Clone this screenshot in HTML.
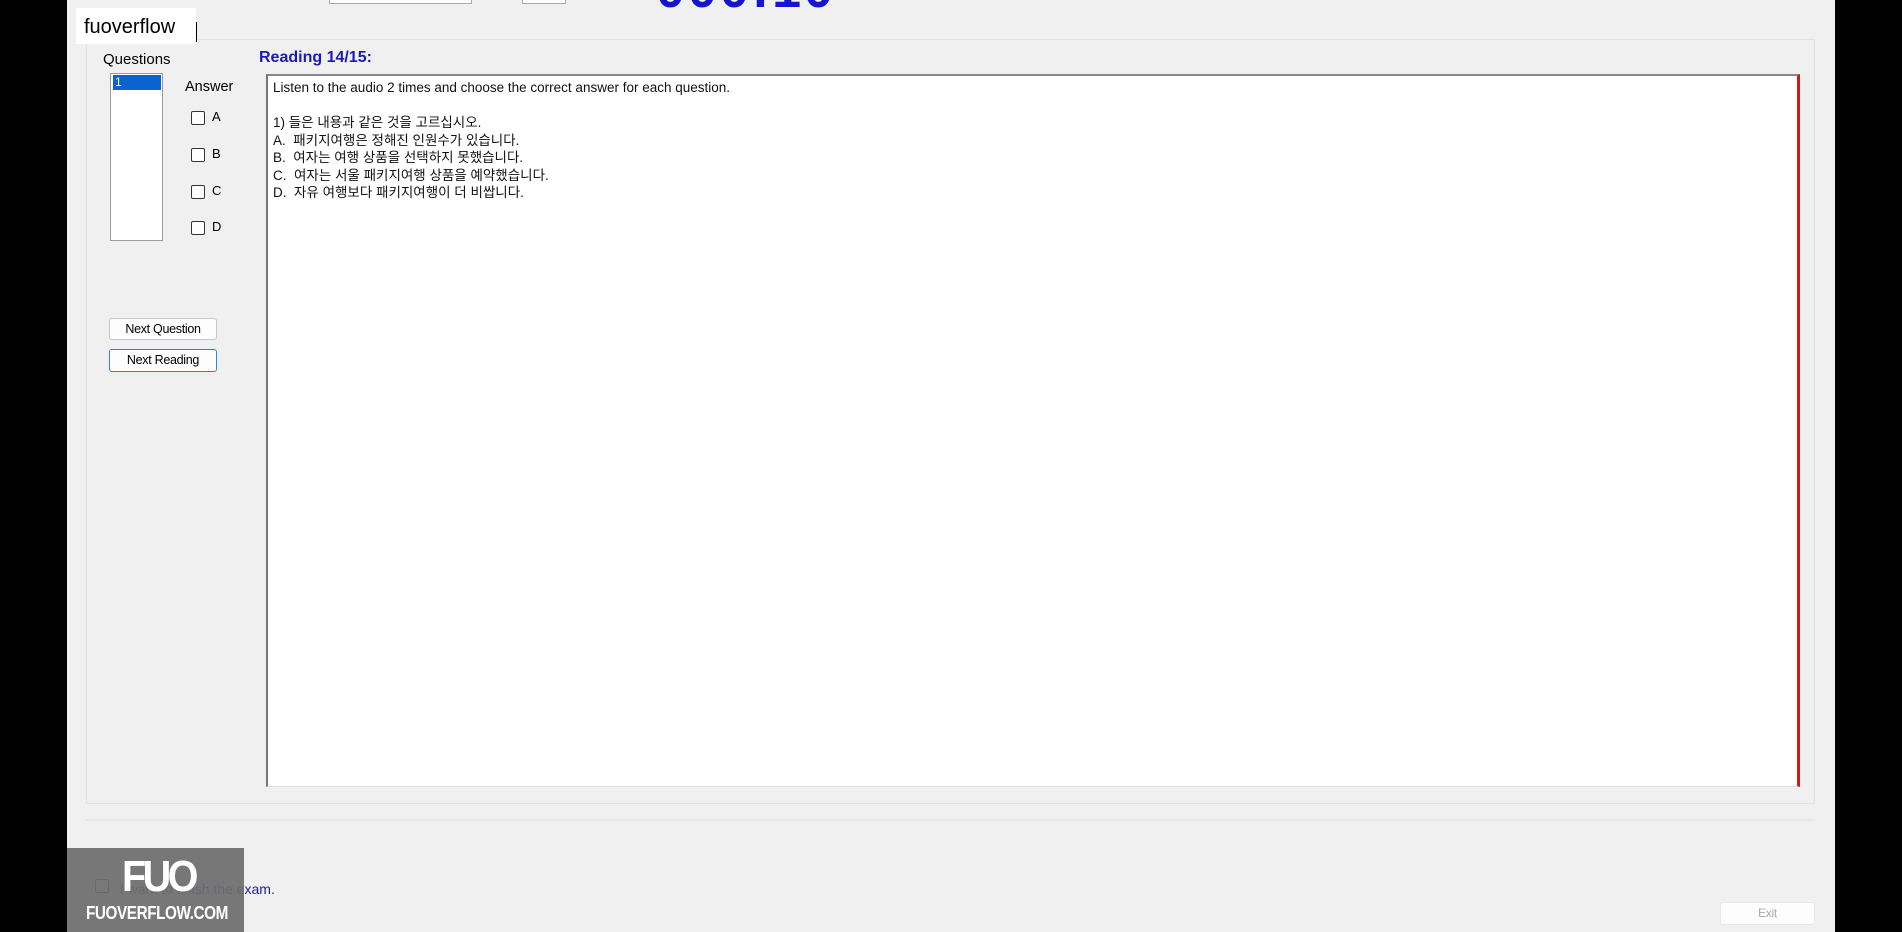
<!DOCTYPE html>
<html><head><meta charset="utf-8"><style>
*{margin:0;padding:0;box-sizing:border-box}
body{width:1902px;height:932px;overflow:hidden;background:#000;position:relative;font-family:"Liberation Sans","Noto Sans CJK KR",sans-serif}
.a{position:absolute}
.app{left:67px;top:0;width:1768px;height:932px;background:#f0f0f0}
.chk{width:14px;height:14px;border:1px solid #333;border-radius:2px;background:#fff}
.t{font-size:14px;color:#000;white-space:nowrap}
.btn{background:#fdfdfd;border:1px solid #c8c8c8;border-radius:3px;font-size:12.5px;text-align:center;line-height:20px;letter-spacing:-0.3px}
</style></head><body>
<div class="a app"></div>
<div class="a" style="left:329px;top:-4px;width:143px;height:8px;border:1px solid #aaa;background:#fff"></div>
<div class="a" style="left:522px;top:-4px;width:44px;height:8px;border:1px solid #aaa;background:#fff"></div>
<div class="a" style="left:656px;top:-40px;font:bold 52px 'Liberation Sans',sans-serif;color:#1515d0;letter-spacing:3px">000:10</div>
<div class="a" style="left:86px;top:39px;width:1729px;height:765px;border:1px solid #e2e2e2"></div>
<div class="a" style="left:86px;top:819px;width:1729px;height:2px;background:#e8e8e8"></div>
<div class="a" style="left:76px;top:8px;width:120px;height:36px;background:#fff"></div>
<div class="a" style="left:84px;top:16px;font-size:20px;color:#000">fuoverflow</div>
<div class="a" style="left:196px;top:22px;width:1px;height:20px;background:#000"></div>
<div class="a t" style="left:103px;top:51px;font-size:15px">Questions</div>
<div class="a" style="left:110px;top:73px;width:53px;height:168px;background:#fff;border:1px solid #999"></div>
<div class="a" style="left:113px;top:75px;width:48px;height:15px;background:#0a64d0;color:#fff;font-size:12px;line-height:15px;padding-left:2px">1</div>
<div class="a t" style="left:185px;top:79px;font-size:14.5px">Answer</div>
<div class="a chk" style="left:191px;top:111px"></div><div class="a t" style="left:212px;top:109px;font-size:13px">A</div>
<div class="a chk" style="left:191px;top:148px"></div><div class="a t" style="left:212px;top:146px;font-size:13px">B</div>
<div class="a chk" style="left:191px;top:185px"></div><div class="a t" style="left:212px;top:183px;font-size:13px">C</div>
<div class="a chk" style="left:191px;top:221px"></div><div class="a t" style="left:212px;top:219px;font-size:13px">D</div>
<div class="a btn" style="left:109px;top:318px;width:108px;height:22px">Next Question</div>
<div class="a btn" style="left:109px;top:349px;width:108px;height:23px;border:1.5px solid #3a7fd0">Next Reading</div>
<div class="a" style="left:259px;top:49px;font:bold 16px 'Liberation Sans',sans-serif;color:#1a1ab8">Reading 14/15:</div>
<div class="a" style="left:266px;top:74px;width:1534px;height:713px;background:#fff;border-left:2px solid #777;border-top:2px solid #888;border-bottom:1px solid #ddd;border-right:3px solid #d01818"></div>
<div class="a t" style="left:273px;top:79px;line-height:17.5px;font-size:13.5px;color:#111">Listen to the audio 2 times and choose the correct answer for each question.<br><br>1) 들은 내용과 같은 것을 고르십시오.<br>A.&nbsp; 패키지여행은 정해진 인원수가 있습니다.<br>B.&nbsp; 여자는 여행 상품을 선택하지 못했습니다.<br>C.&nbsp; 여자는 서울 패키지여행 상품을 예약했습니다.<br>D.&nbsp; 자유 여행보다 패키지여행이 더 비쌉니다.</div>
<div class="a chk" style="left:95px;top:879px"></div>
<div class="a t" style="left:120px;top:881px;color:#2020a0;font-size:14px">I want to finish the exam.</div>
<div class="a" style="left:67px;top:848px;width:177px;height:84px;background:rgba(110,110,110,0.93)"></div>
<div class="a" style="left:118px;top:852px;font:bold 44px 'Liberation Sans',sans-serif;color:#fff;letter-spacing:-4px;transform:scaleX(0.9)">FUO</div>
<div class="a" style="left:86px;top:903px;font:bold 18px 'Liberation Sans',sans-serif;color:#fff;transform:scaleX(0.85);transform-origin:left;letter-spacing:-0.5px">FUOVERFLOW.COM</div>
<div class="a btn" style="left:1720px;top:902px;width:95px;height:23px;border-color:#e8e8e8;color:#aaa;font-size:12px">Exit</div>
</body></html>
